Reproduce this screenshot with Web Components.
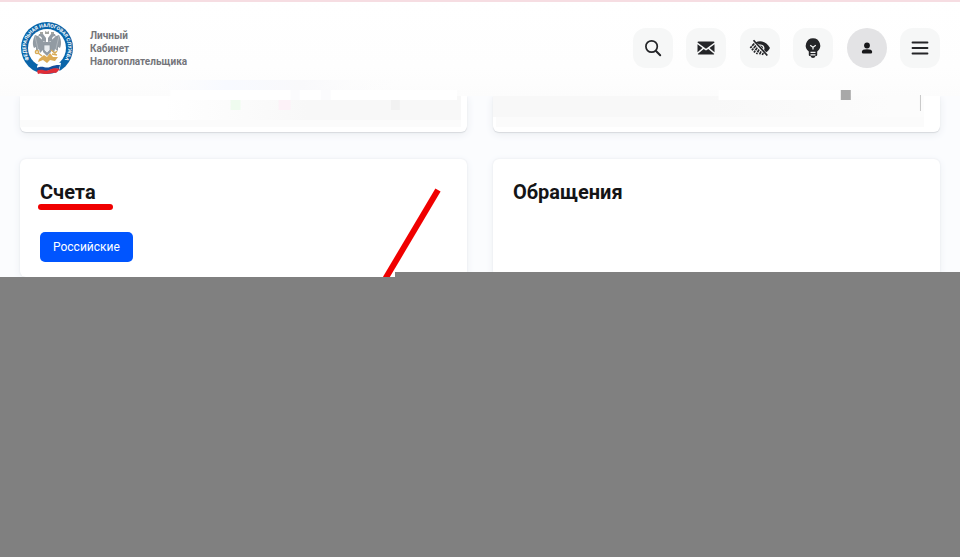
<!DOCTYPE html>
<html lang="ru">
<head>
<meta charset="utf-8">
<meta name="viewport" content="width=device-width">
<title>Личный кабинет налогоплательщика</title>
<style>
html, body { height: 100%; }
body { margin: 0; background: #fbfcfe; color: #141416; font-family: Roboto, "Liberation Sans", sans-serif; }
</style>
</head>
<body>
<account-page></account-page>
<script>
const define = (name, html) => {
  const t = document.createElement('template');
  t.innerHTML = html;
  customElements.define(name, class extends HTMLElement {
    constructor() {
      super();
      this.attachShadow({ mode: 'open' }).append(t.content.cloneNode(true));
      const b = this.shadowRoot.querySelector('button');
      if (b && this.hasAttribute('label')) b.setAttribute('aria-label', this.getAttribute('label'));
    }
  });
};

define('tax-emblem', `
<style>
:host { display: block; width: 54px; height: 54px; }
svg { display: block; width: 100%; height: 100%; }
text { font: 700 5px Roboto, sans-serif; fill: #fff; }
</style>
<svg viewBox="0 0 54 54" role="img" aria-label="Федеральная налоговая служба">
  <defs><path id="ring" d="M16.500 45.200 A21 21 0 1 1 37.500 45.200"/></defs>
  <circle cx="27" cy="27" r="26" fill="#0a65a9"/>
  <circle cx="27" cy="27" r="19" fill="#fff"/>
  <text text-anchor="middle"><textPath href="#ring" startOffset="50%">ФЕДЕРАЛЬНАЯ НАЛОГОВАЯ СЛУЖБА</textPath></text>
  <g fill="#929ba3">
    <path d="M24 22c-2-4-5-7-9-8-2 4-3 9-1 13l2-1 0 4 3-2 1 4 4-4zM30 22c2-4 5-7 9-8 2 4 3 9 1 13l-2-1 0 4-3-2-1 4-4-4z"/>
    <path d="M21 20l1-3-2-2-2 1 1-3 4 0 3 4v4zM33 20l-1-3 2-2 2 1-1-3-4 0-3 4v4z"/>
    <path d="M23 21h8v10l-4 4-4-4z"/>
  </g>
  <path d="M15 15l3 13M39 15l-3 13" stroke="#c4cacd" stroke-width=".6" fill="none"/>
  <path d="M24 24h6v5l-3 3-3-3z" fill="#e9edf0" stroke="#8d979f" stroke-width=".7"/>
  <path d="M25 13v-3l2 1 2-1v3zM20 13l0-2 3 0v2zM31 13v-2l3 0v2z" fill="#a4a6a2"/>
  <g fill="none" stroke="#d8ac58" stroke-width="1.500">
    <circle cx="17" cy="31" r="1.600"/><path d="M18 32l4 3M31 29l4 3 2-2M32 33l5 1"/>
  </g>
  <path d="M19 38l5-4 3 2 3-4 3 4 5 0-3 4-5-1-3 3-4-3-5 2z" fill="#dcab55"/>
  <path d="M17 45c5-6 9 1 14-2s7-2 10-1l-2 9c-5-2-8 1-12 1s-5-1-9 1z" fill="#fff"/>
  <path d="M17 47c6-3 8 1 13-1s7-2 10-2l-1 4c-5-1-8 1-12 2s-5-1-10 0z" fill="#164f9c"/>
  <path d="M17 50c5-3 8 1 12-1s6-2 11-1l-4 4c-4-1-6 1-10 1s-4-1-8 0z" fill="#e02c35"/>
</svg>`);

define('icon-button', `
<style>
:host { display: block; --face: #f6f7f7; --radius: 13px; }
:host([round]) { --face: #e3e3e5; --radius: 50%; }
button { display: grid; place-items: center; width: 40px; height: 40px; padding: 0; border: 0; border-radius: var(--radius); background: var(--face); color: #242528; }
::slotted(svg) { display: block; width: 24px; height: 24px; }
</style>
<button type="button"><slot></slot></button>`);

define('site-header', `
<style>
:host { display: flex; align-items: center; justify-content: space-between; box-sizing: border-box; height: 96px; padding: 0 20px; box-shadow: inset 0 2px #f6dde2; background: linear-gradient(#fff, #fefefe 70%, #fcfcfc); position: relative; z-index: 1; }
a { display: flex; align-items: center; gap: 16px; color: #74757a; text-decoration: none; font-size: 10px; font-weight: 700; line-height: 13px; }
nav { display: flex; justify-content: space-between; width: 307px; }
</style>
<a href="#"><tax-emblem></tax-emblem><span>Личный<br>Кабинет<br>Налогоплательщика</span></a>
<nav aria-label="Разделы">
  <icon-button label="Поиск"><svg viewBox="0 0 24 24" fill="none" stroke="#242528" stroke-width="1.700" stroke-linecap="round"><circle cx="10.600" cy="10.500" r="5.700"/><path d="M15 15l4.200 4.200" stroke-width="2"/></svg></icon-button>
  <icon-button label="Сообщения"><svg viewBox="0 0 24 24"><path fill="#242528" d="M4.500 5.500h15q1 0 1 1L12 12.700 3.500 6.500q0-1 1-1zM3.500 8.200l5 3.800-5 4.200zM20.500 8.200v8l-5-4.200zM9.700 12.900l2.300 1.600 2.300-1.600 6 5q-.4.700-1.200.7H4.900q-.8 0-1.200-.7z"/></svg></icon-button>
  <icon-button label="Версия для слабовидящих"><svg viewBox="0 0 24 24"><path fill="#242528" d="M7.500 6.500C13 3.800 18.500 6 22 12c-1 2-2.200 3.200-3.800 4.200l-2.100-2.300c1.400-3.300-1.400-6.100-4.600-5.400z"/><path fill="#242528" d="M12 9.600c2.200.1 3.300 1.300 3 3.200z"/><path fill="none" stroke="#242528" stroke-width="1.700" d="M5.500 4.200l13.800 15.300"/><path fill="none" stroke="#242528" stroke-width="1.700" stroke-dasharray="3.200 .6" d="M6.300 7.500L2.300 12M7.900 9.500L3.900 14.300M9.200 11.600L6 16.500M11 13.500L8.500 18.200M13 15.300L11.400 18.900M15.200 17L14.300 19"/></svg></icon-button>
  <icon-button label="Подсказки"><svg viewBox="0 0 24 24"><path fill="#242528" d="M12 2.200a7.300 7.300 0 0 0-4.200 13.200V19q0 1 1 1h.7q.5 2 2.500 2t2.500-2h.7q1 0 1-1v-3.600A7.300 7.300 0 0 0 12 2.200z"/><path fill="none" stroke="#f6f7f7" stroke-width="1.200" d="M9.200 9.300l2.800 2 2.800-2M12 11v2.500M9.500 16.300h5M9.500 18.800h5"/></svg></icon-button>
  <icon-button round label="Профиль"><svg viewBox="0 0 24 24" fill="#171719"><circle cx="12" cy="9.500" r="2.900"/><path d="M6.800 16c0-2.100 2-2.700 5.200-2.700s5.200.6 5.200 2.700q0 1.500-1.500 1.500H8.300q-1.500 0-1.500-1.500z"/></svg></icon-button>
  <icon-button label="Меню"><svg viewBox="0 0 24 24" fill="none" stroke="#242528" stroke-width="1.800" stroke-linecap="round"><path d="M4.500 6.500h15M4.500 12h15M4.500 17.500h15"/></svg></icon-button>
</nav>`);

define('info-card', `
<style>
:host { display: block; box-sizing: border-box; padding: 20px 20px 15px; border-radius: 6px; background: #fff; box-shadow: 0 0 2px #e3e6ea, 0 2px 8px #edf0f5; }
h2 { margin: 0; font-size: 20px; line-height: 26px; font-weight: 700; }
</style>
<h2><slot name="title"></slot></h2><slot></slot>`);

/* Lower end of a card whose faded content reaches a little over the header. */
define('faded-card', `
<style>
:host { display: block; border-radius: 0 0 6px 6px; background: #fff; box-shadow: 0 1px 1px #d7dade, 0 2px 8px #e8ebf0; }
svg { display: block; width: 100%; height: 36px; overflow: visible; position: relative; z-index: 2; }
.right { display: none; }
:host([side=right]) .right { display: block; }
:host([side=right]) .left { display: none; }
</style>
<svg class="left" viewBox="0 0 446 36" preserveAspectRatio="none" aria-hidden="true">
  <defs><linearGradient id="l"><stop offset=".33" stop-color="#fff"/><stop offset=".65" stop-color="#f8f8f8"/></linearGradient>
  <linearGradient id="u"><stop offset="0" stop-color="#fbfcff" stop-opacity="0"/><stop offset=".3" stop-color="#f8faff"/><stop offset=".6" stop-color="#f9f9fb"/><stop offset="1" stop-color="#fcfcfc" stop-opacity="0"/></linearGradient></defs>
  <path d="M130-16h250v10H130z" fill="url(#u)"/>
  <path d="M0 0h440v24H0z" fill="url(#l)"/><path d="M0 24h440v7H0z" fill="#fbfbfb"/>
  <path d="M150-6h286V4H150z" fill="#fff"/><path d="M270-6h9V4h-9zM300-6h10V4h-10z" fill="#fbfbfd"/>
  <path d="M210 4h10v10h-10z" fill="#effcef"/><path d="M258 4h12v10h-12z" fill="#fdf2f8"/><path d="M370 4h9v10h-9z" fill="#f1f1f1"/>
</svg>
<svg class="right" viewBox="0 0 446 36" preserveAspectRatio="none" aria-hidden="true">
  <defs><linearGradient id="r"><stop offset=".5" stop-color="#f8f8f8"/><stop offset=".92" stop-color="#fcfcfc"/></linearGradient></defs>
  <path d="M0 0h430v21H0z" fill="url(#r)"/><path d="M3 21h427v10H3z" fill="#fbfbfb"/>
  <path d="M225-6h122V4H225z" fill="#fff"/><path d="M347-6h10V4h-10z" fill="#a8a8a8"/><path d="M426.500-1v16" stroke="#c8c8c8"/>
</svg>`);

define('accounts-card', `
<style>
:host { display: block; }
info-card { position: relative; height: 100%; }
button { display: block; height: 30px; margin-top: 27px; padding: 0 13px; border: 0; border-radius: 5px; background: #0055ff; color: #fff; font: 400 12px Roboto, sans-serif; }
.underline, .stroke { position: absolute; pointer-events: none; }
.underline { left: 18px; top: 45px; width: 75px; height: 6px; border-radius: 3px; background: #f00000; }
.stroke { right: 24px; top: 28px; width: 60px; height: 96px; }
</style>
<info-card><span slot="title">Счета</span>
  <button type="button">Российские</button>
  <span class="underline"></span>
  <svg class="stroke" viewBox="0 0 60 96" aria-hidden="true"><path d="M55 3L1 94" stroke="#f00000" stroke-width="6"/></svg>
</info-card>`);

define('account-page', `
<style>
:host { display: flex; flex-direction: column; min-height: 100%; overflow: hidden; }
main { display: grid; grid-template-columns: 1fr 1fr; gap: 27px 26px; padding: 0 20px; background: #fbfcfe; }
info-card, accounts-card { min-height: 118px; }
.cover { flex: 1; position: relative; background: #808080; }
.cover::before { content: ""; position: absolute; left: 395px; right: 0; top: -5px; height: 5px; background: #808080; }
</style>
<site-header></site-header>
<main>
  <faded-card></faded-card><faded-card side="right"></faded-card>
  <accounts-card></accounts-card>
  <info-card><span slot="title">Обращения</span></info-card>
</main>
<div class="cover"></div>`);
</script>
</body>
</html>
